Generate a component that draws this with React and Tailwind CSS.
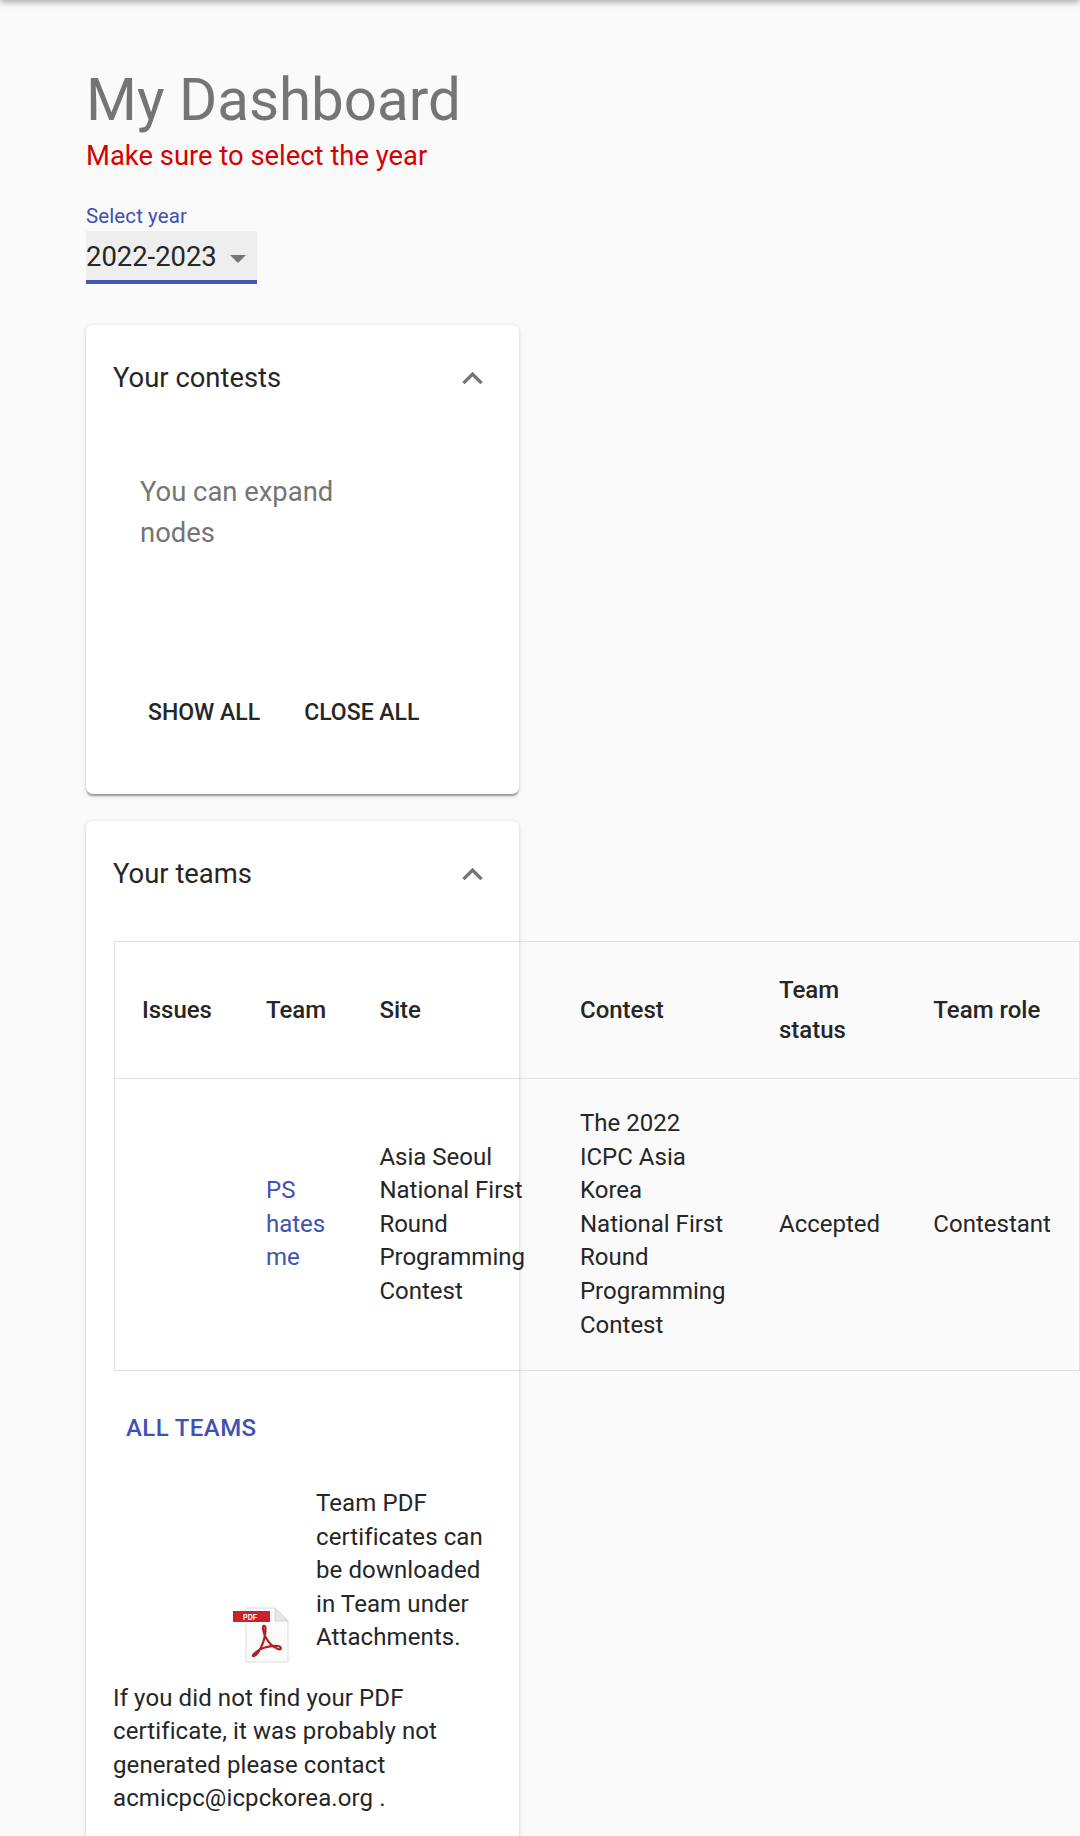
const cardShadow = "shadow-[0_3.4px_1.7px_-1.7px_rgba(0,0,0,0.2),0_1.7px_1.7px_0_rgba(0,0,0,0.14),0_1.7px_5px_0_rgba(0,0,0,0.12)]";

const headers = [
  { label: "Issues", width: "w-[124.6px]" },
  { label: "Team", width: "w-[113.4px]" },
  { label: "Site", width: "w-[200.6px]" },
  { label: "Contest", width: "w-[199px]" },
  { label: "Team status", width: "w-[154.4px]" },
  { label: "Team role", width: "w-[173px]" },
];

function ExpandLess() {
  return (
    <svg viewBox="0 0 24 24" className="h-[41px] w-[41px] fill-[#757575]">
      <path d="M12 8l-6 6 1.41 1.41L12 10.83l4.59 4.58L18 14z" />
    </svg>
  );
}

function AccordionHeader({ title }) {
  return (
    <div className="flex h-[106px] items-center justify-between pl-[27px] pr-[26px]">
      <h2 className="text-[27.4px] leading-[40px] text-[#262626]">{title}</h2>
      <ExpandLess />
    </div>
  );
}

function PdfIcon() {
  return (
    <svg viewBox="0 0 58 58" className="-mb-[9px] h-[58px] w-[58px] shrink-0">
      <path d="M14 2H43L56 15V56H14Z" fill="#fbfbfb" stroke="#dcdcdc" strokeWidth="1" />
      <path d="M43 2V15H56Z" fill="#e6e6e6" stroke="#cfcfcf" strokeWidth="0.8" />
      <rect x="1" y="5" width="37" height="11" fill="#c9222d" />
      <text x="11" y="13.5" fontFamily="'Liberation Sans', sans-serif" fontSize="8.5" fontWeight="700" fill="#fff" textLength="14" lengthAdjust="spacingAndGlyphs">PDF</text>
      <path
        d="M21.5 48.5C19.5 51 23 50.5 26 46.5C30 41 34 31 33.5 22C33 18.5 30.5 19.5 31 23C32 31 38 40 46 43C50 44.5 49.5 40.5 46 40C38 39 27 42 21.5 48.5Z"
        fill="none"
        stroke="#ad2027"
        strokeWidth="2.2"
      />
    </svg>
  );
}

function TeamsTable() {
  return (
    <table className="w-[966px] max-w-none table-fixed border-collapse border border-[#e0e0e0] text-[24px] text-[#262626]">
      <thead>
        <tr className="border-b border-[#e0e0e0]">
          {headers.map((header) => (
            <th key={header.label} className={`${header.width} px-[27.4px] py-[28px] text-left align-middle font-medium leading-[40px]`}>
              {header.label}
            </th>
          ))}
        </tr>
      </thead>
      <tbody>
        <tr className="leading-[33.6px]">
          <td className="px-[27.4px] py-[28px]"></td>
          <td className="px-[27.4px] py-[28px] text-[#3f51b5]">PS hates me</td>
          <td className="px-[27.4px] py-[28px]">Asia Seoul National First Round Programming Contest</td>
          <td className="px-[27.4px] py-[28px]">The 2022 ICPC Asia Korea National First Round Programming Contest</td>
          <td className="px-[27.4px] py-[28px]">Accepted</td>
          <td className="px-[27.4px] py-[28px]">Contestant</td>
        </tr>
      </tbody>
    </table>
  );
}

export default function App() {
  return (
    <div className="relative h-[1836px] w-[1080px] overflow-hidden bg-[#fafafa] font-['Roboto',sans-serif]">
      <div className="absolute inset-x-0 -top-[10px] h-[10px] shadow-[0_2px_7px_rgba(0,0,0,0.35)]"></div>

      <div className="pl-[86px] pt-[65px]">
        <h1 className="text-[58.3px] leading-[70px] text-[#757575]">My Dashboard</h1>
        <p className="mt-[1px] text-[27.4px] leading-[40px] text-[#d50000]">Make sure to select the year</p>

        <label className="mt-[28px] block text-[20.5px] leading-[24px] tracking-[0.1px] text-[#3f51b5]">Select year</label>
        <div className="mt-[3px] flex h-[53px] w-[171px] items-center justify-between border-b-4 border-[#4355b5] bg-[#eeeeee] pr-[4px] pt-[4px] text-[27.4px] text-[#262626]">
          <span>2022-2023</span>
          <span className="mr-[7px] mt-[2px] h-0 w-0 border-x-[8.5px] border-t-[8.5px] border-x-transparent border-t-[#757575]"></span>
        </div>

        <div className={`mt-[41px] h-[469px] w-[433px] rounded-[7px] bg-white ${cardShadow}`}>
          <AccordionHeader title="Your contests" />
          <p className="ml-[54px] mt-[41px] w-[240px] text-[27.4px] leading-[41px] text-[#757575]">You can expand nodes</p>
          <div className="ml-[48px] mt-[132px] flex gap-[16px] text-[23px] font-medium text-[#262626]">
            <button className="px-[14px] py-[10px]">SHOW ALL</button>
            <button className="px-[14px] py-[10px]">CLOSE ALL</button>
          </div>
        </div>

        <div className={`mt-[27px] w-[433px] rounded-[7px] bg-white pb-[100px] ${cardShadow}`}>
          <AccordionHeader title="Your teams" />
          <div className="ml-[27.5px] mt-[14px]">
            <TeamsTable />
          </div>
          <button className="ml-[27px] mt-[19px] px-[13px] py-[18px] text-[24px] font-medium leading-[40px] tracking-[0.4px] text-[#3f51b5]">ALL TEAMS</button>
          <div className="mt-[21px] flex items-end pl-[146px] pr-[20px]">
            <PdfIcon />
            <p className="ml-[26px] text-[24px] leading-[33.5px] tracking-[0.1px] text-[#262626]">Team PDF certificates can be downloaded in Team under Attachments.</p>
          </div>
          <p className="ml-[27px] mt-[27px] w-[380px] text-[24px] leading-[33.5px] tracking-[0.1px] text-[#262626]">If you did not find your PDF certificate, it was probably not generated please contact acmicpc@icpckorea.org .</p>
        </div>
      </div>
    </div>
  );
}
